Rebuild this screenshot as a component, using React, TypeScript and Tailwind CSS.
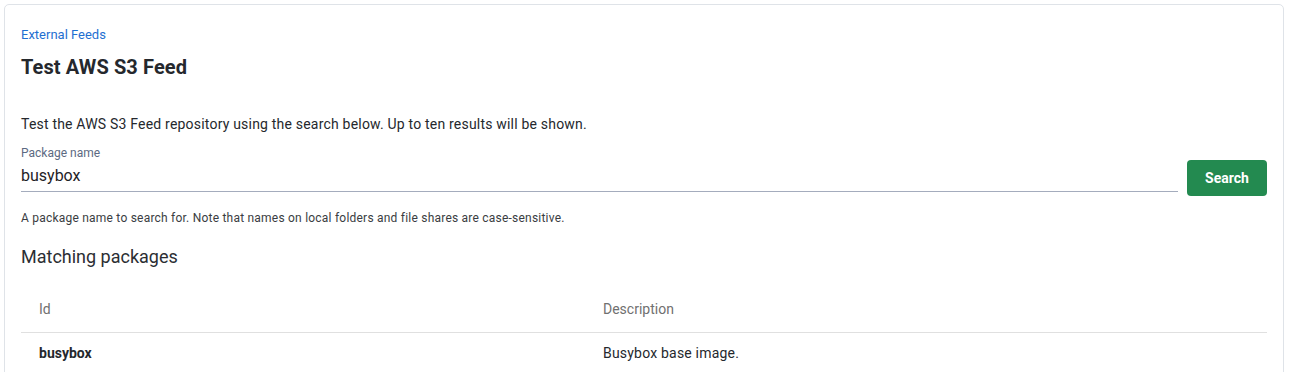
export default function App() {
    return (
        <div className="min-h-[372px] bg-white pt-1 pl-1 pr-[6px] font-['Roboto',sans-serif]">
            <div className="rounded-[5px] border border-[#dfe3e8] bg-white px-4 pt-[21px] pb-6 text-[#25282d]">
                <a className="block text-[13px] leading-[18px] text-[#1f6fd1]">External Feeds</a>
                <h1 className="mt-[11px] text-[20px] leading-[24px] font-bold tracking-[0.1px] text-[#25282d]">Test AWS S3 Feed</h1>

                <p className="mt-[35px] text-[14px] leading-[20px] tracking-[0.2px]">
                    Test the AWS S3 Feed repository using the search below. Up to ten results will be shown.
                </p>

                <div className="mt-[11px] flex items-end gap-[9px]">
                    <div className="flex-1">
                        <label className="block text-[12px] leading-[16px] text-[#5c6a82]">Package name</label>
                        <div className="mt-[4px] border-b border-[#a4acbd] pb-[4px] text-[16px] leading-[22px] text-[#1f2227]">busybox</div>
                    </div>
                    <button className="mb-[-4px] h-[36px] w-[80px] rounded-[4px] bg-[#238a50] text-[14px] font-bold text-white">
                        Search
                    </button>
                </div>

                <p className="mt-[18px] text-[12px] leading-[16px] tracking-[0.22px] text-[#3a3d42]">
                    A package name to search for. Note that names on local folders and file shares are case-sensitive.
                </p>

                <h2 className="mt-[20px] text-[18px] leading-[22px] text-[#2b2e33]">Matching packages</h2>

                <table className="mt-[23px] w-full text-left">
                    <thead>
                        <tr className="border-b border-[#e0e0e0]">
                            <th className="w-[582px] px-[18px] pt-[8px] pb-[13px] text-[14px] leading-[20px] font-normal text-[#707070]">Id</th>
                            <th className="px-0 pt-[8px] pb-[13px] text-[14px] leading-[20px] font-normal text-[#707070]">Description</th>
                        </tr>
                    </thead>
                    <tbody>
                        <tr>
                            <td className="px-[18px] pt-[10px] pb-[10px] text-[14px] leading-[20px] font-bold text-[#25282d]">busybox</td>
                            <td className="px-0 pt-[10px] pb-[10px] text-[14px] leading-[20px] tracking-[0.2px] text-[#25282d]">Busybox base image.</td>
                        </tr>
                    </tbody>
                </table>
            </div>
        </div>
    );
}
